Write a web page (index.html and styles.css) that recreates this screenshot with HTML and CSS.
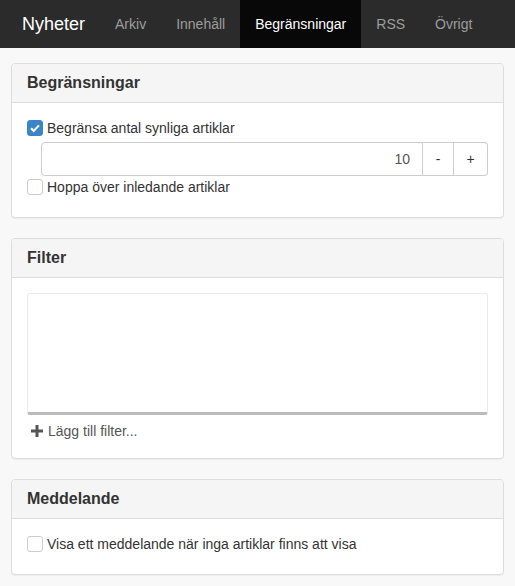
FILE: index.html
```html
<!DOCTYPE html>
<html lang="sv">
<head>
    <meta charset="UTF-8">
    <title>Nyheter</title>
    <link rel="stylesheet" href="styles.css">
</head>
<body>
    <nav class="navbar">
        <span class="brand">Nyheter</span>
        <ul class="nav">
            <li>Arkiv</li>
            <li>Innehåll</li>
            <li class="active">Begränsningar</li>
            <li>RSS</li>
            <li>Övrigt</li>
        </ul>
    </nav>

    <main class="content">
        <section class="panel">
            <h3 class="panel-heading">Begränsningar</h3>
            <div class="panel-body">
                <label class="check">
                    <span class="box checked"></span>
                    Begränsa antal synliga artiklar
                </label>
                <div class="spinner">
                    <input type="text" value="10">
                    <button>-</button>
                    <button>+</button>
                </div>
                <label class="check">
                    <span class="box"></span>
                    Hoppa över inledande artiklar
                </label>
            </div>
        </section>

        <section class="panel">
            <h3 class="panel-heading">Filter</h3>
            <div class="panel-body filter-body">
                <div class="filter-list"></div>
                <a class="add-filter">
                    <svg width="12" height="12" viewBox="0 0 12 12"><path d="M4.5 0h3v4.5H12v3H7.5V12h-3V7.5H0v-3h4.5z" fill="#555"/></svg>
                    Lägg till filter...
                </a>
            </div>
        </section>

        <section class="panel">
            <h3 class="panel-heading">Meddelande</h3>
            <div class="panel-body">
                <label class="check">
                    <span class="box"></span>
                    Visa ett meddelande när inga artiklar finns att visa
                </label>
            </div>
        </section>
    </main>
</body>
</html>
```

FILE: styles.css
```css
body {
    margin: 0;
    font-family: "Liberation Sans", Arial, sans-serif;
    font-size: 14px;
    line-height: 20px;
    color: #333;
    background: #f8f8f8;
}

/* top bar */
.navbar {
    display: flex;
    height: 48px;
    padding-left: 7px;
    background: #2b2b2b;
}
.brand {
    padding: 0 15px;
    font-size: 18px;
    line-height: 48px;
    color: #fff;
}
.nav {
    display: flex;
    margin: 0;
    padding: 0;
    list-style: none;
}
.nav li {
    padding: 14px 15px;
    color: #9d9d9d;
}
.nav li.active {
    background: #080808;
    color: #fff;
}

/* panels */
.content {
    padding: 15px 11px 0 11px;
}
.panel {
    background: #fff;
    border: 1px solid #ddd;
    border-radius: 4px;
    box-shadow: 0 1px 1px rgba(0,0,0,0.05);
    margin-bottom: 20px;
}
.panel-heading {
    margin: 0;
    padding: 10px 15px;
    font-size: 16px;
    line-height: 18px;
    font-weight: bold;
    background: #f5f5f5;
    border-bottom: 1px solid #ddd;
    border-radius: 3px 3px 0 0;
}
.panel-body {
    padding: 15px 15px 20px;
}
.panel-body.filter-body {
    padding-bottom: 17px;
}

/* checkboxes */
.check {
    display: flex;
    align-items: center;
    gap: 4px;
    height: 20px;
}
.box {
    box-sizing: border-box;
    width: 16px;
    height: 16px;
    border: 1px solid #ccc;
    border-radius: 3px;
    background: #fff;
}
.box.checked {
    border-color: #3a85c8;
    background: #3a85c8 url("data:image/svg+xml,%3Csvg xmlns='http://www.w3.org/2000/svg' viewBox='0 0 16 16'%3E%3Cpath d='M3.5 8.3l3 3 6-6.3' fill='none' stroke='%23fff' stroke-width='2.4'/%3E%3C/svg%3E") center/14px no-repeat;
}

/* number spinner */
.spinner {
    display: flex;
    height: 34px;
    margin: 4px 0 1px 14px;
}
.spinner input {
    flex: 1;
    min-width: 0;
    box-sizing: border-box;
    height: 34px;
    padding: 0 12px;
    font: inherit;
    color: #555;
    text-align: right;
    border: 1px solid #ccc;
    border-radius: 4px 0 0 4px;
}
.spinner button {
    width: 31px;
    font: inherit;
    color: #333;
    background: #fff;
    border: 1px solid #ccc;
    border-left: none;
}
.spinner button:last-child {
    width: 34px;
    border-radius: 0 4px 4px 0;
}

/* filter list */
.filter-list {
    height: 118px;
    border: 1px solid #ebebeb;
    border-bottom: 3px solid #bbb;
    border-radius: 3px;
}
.add-filter {
    display: flex;
    align-items: center;
    gap: 5px;
    margin-top: 6px;
    padding-left: 4px;
    color: #555;
}
```
